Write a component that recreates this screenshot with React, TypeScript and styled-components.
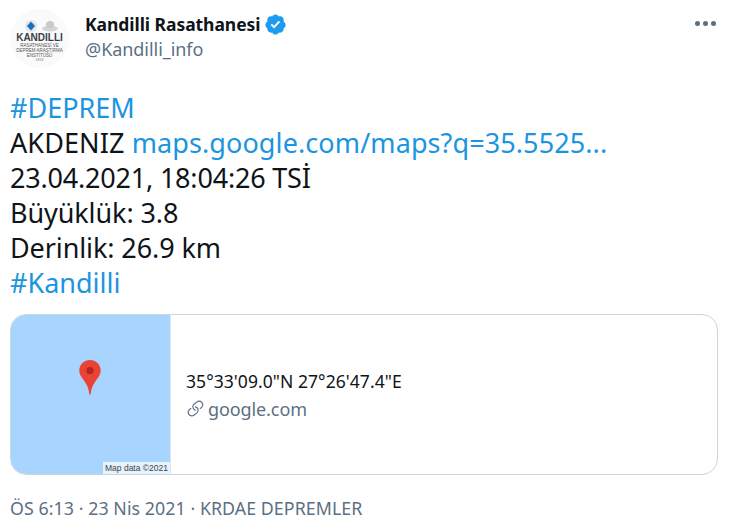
import React from "react";
import styled, { createGlobalStyle } from "styled-components";

const GlobalStyle = createGlobalStyle`
  html, body {
    margin: 0;
    background: #fff;
    font-family: "Noto Sans", "Open Sans", sans-serif;
  }
`;

export default function App() {
  return (
    <Tweet>
      <GlobalStyle />
      <Header>
        <Avatar>
          <LogoIcons viewBox="0 0 44 14">
            <circle cx="13" cy="7" r="6" fill="#dfe7f0" />
            <path d="M13 2.500l4 4.500-4 4.500-4-4.500z" fill="#1f6fb5" />
            <ellipse cx="32" cy="9.500" rx="8" ry="3" fill="#d4d4d4" />
            <ellipse cx="32" cy="5.500" rx="4" ry="3.500" fill="#c9c9c9" />
          </LogoIcons>
          <LogoTitle>KANDILLI</LogoTitle>
          <LogoLine>RASATHANESİ VE</LogoLine>
          <LogoLine>DEPREM ARAŞTIRMA</LogoLine>
          <LogoLine>ENSTİTÜSÜ</LogoLine>
          <LogoYear>1868</LogoYear>
        </Avatar>
        <Names>
          <NameRow>
            <DisplayName>Kandilli Rasathanesi</DisplayName>
            <Badge viewBox="0 0 24 24">
              <path
                fill="#1d9bf0"
                d="M22.5 12.5c0-1.58-.875-2.95-2.148-3.6.154-.435.238-.905.238-1.4 0-2.21-1.71-3.998-3.818-3.998-.47 0-.92.084-1.336.25C14.818 2.415 13.51 1.5 12 1.5s-2.816.917-3.437 2.25c-.415-.165-.866-.25-1.336-.25-2.11 0-3.818 1.79-3.818 4 0 .494.083.964.237 1.4-1.272.65-2.147 2.018-2.147 3.6 0 1.495.782 2.798 1.942 3.486-.02.17-.032.34-.032.514 0 2.21 1.708 4 3.818 4 .47 0 .92-.086 1.335-.25.62 1.334 1.926 2.25 3.437 2.25 1.512 0 2.818-.916 3.437-2.25.415.163.865.248 1.336.248 2.11 0 3.818-1.79 3.818-4 0-.174-.012-.344-.033-.513 1.158-.687 1.943-1.99 1.943-3.484z"
              />
              <path
                fill="#fff"
                d="M10.54 16.2l-3.6-3.6 1.42-1.42 2.1 2.1 4.9-5.3 1.48 1.36z"
              />
            </Badge>
          </NameRow>
          <Handle>@Kandilli_info</Handle>
        </Names>
        <More>
          <Dot />
          <Dot />
          <Dot />
        </More>
      </Header>

      <Body>
        <Line>
          <Link>#DEPREM</Link>
        </Line>
        <Line $spacing={0.1}>
          AKDENIZ <Link>maps.google.com/maps?q=35.5525...</Link>
        </Line>
        <Line $spacing={-0.2}>23.04.2021, 18:04:26 TSİ</Line>
        <Line $spacing={-0.1}>Büyüklük: 3.8</Line>
        <Line $spacing={-0.1}>Derinlik: 26.9 km</Line>
        <Line>
          <Link>#Kandilli</Link>
        </Line>
      </Body>

      <Card>
        <MapPane>
          <Pin viewBox="0 0 22 36">
            <path
              fill="#ea4335"
              d="M11 0C5 0 0 4.700 0 10.800c0 3.200 1.300 5.500 3.300 8.200 3.300 4.400 6.300 8.600 6.900 15.500.1.800.4 1.500.8 1.500s.7-.7.8-1.500c.6-6.900 3.600-11.100 6.900-15.500 2-2.700 3.300-5 3.300-8.200C22 4.700 17 0 11 0z"
            />
            <circle cx="11" cy="11" r="3.700" fill="#b3261e" />
          </Pin>
          <MapCredit>Map data ©2021</MapCredit>
        </MapPane>
        <CardInfo>
          <CardTitle>35°33'09.0"N 27°26'47.4"E</CardTitle>
          <CardSource>
            <LinkIcon viewBox="0 0 24 24">
              <path d="M11.96 14.945c-.067 0-.136-.01-.203-.027-1.13-.318-2.097-.986-2.795-1.932-.832-1.125-1.176-2.508-.968-3.893s.942-2.605 2.068-3.438l3.53-2.608c2.322-1.716 5.61-1.224 7.33 1.1.83 1.127 1.175 2.51.967 3.895s-.943 2.605-2.07 3.438l-1.48 1.094c-.333.246-.804.175-1.05-.158-.246-.334-.176-.804.158-1.05l1.48-1.095c.803-.592 1.327-1.463 1.476-2.45.148-.988-.098-1.975-.69-2.778-1.225-1.656-3.572-2.01-5.23-.784l-3.53 2.608c-.802.593-1.326 1.464-1.475 2.45-.15.99.097 1.975.69 2.778.498.675 1.187 1.15 1.992 1.377.4.114.633.528.52.928-.092.33-.394.547-.722.547z" />
              <path d="M7.27 22.054c-1.61 0-3.197-.735-4.225-2.125-.832-1.127-1.176-2.51-.968-3.894s.943-2.605 2.07-3.438l1.478-1.094c.334-.245.805-.175 1.05.158s.177.804-.157 1.05l-1.48 1.095c-.803.593-1.326 1.464-1.475 2.45-.148.99.097 1.975.69 2.778 1.225 1.657 3.57 2.01 5.23.785l3.528-2.608c1.658-1.225 2.01-3.57.785-5.23-.498-.674-1.187-1.15-1.992-1.376-.4-.113-.633-.527-.52-.927.112-.4.528-.63.926-.522 1.13.318 2.096.986 2.794 1.932 1.717 2.324 1.224 5.612-1.1 7.33l-3.53 2.608c-.933.693-2.023 1.026-3.105 1.026z" />
            </LinkIcon>
            google.com
          </CardSource>
        </CardInfo>
      </Card>

      <Meta>ÖS 6:13 · 23 Nis 2021 · KRDAE DEPREMLER</Meta>
    </Tweet>
  );
}

const Tweet = styled.div`
  width: 734px;
  height: 529px;
  box-sizing: border-box;
  padding: 9px 16px 0 10px;
  overflow: hidden;
  background: #fff;
`;

const Header = styled.div`
  display: flex;
  align-items: flex-start;
  gap: 16px;
  height: 70px;
`;

const Avatar = styled.div`
  width: 59px;
  height: 59px;
  flex: none;
  display: flex;
  flex-direction: column;
  align-items: center;
  justify-content: center;
  border-radius: 50%;
  background: #fafafa;
  box-sizing: border-box;
  padding-top: 4px;
  font-family: "Liberation Sans", Arial, sans-serif;
`;

const LogoIcons = styled.svg`
  width: 44px;
  height: 14px;
`;

const LogoTitle = styled.div`
  font-size: 10px;
  line-height: 10px;
  font-weight: 700;
  color: #3a3f47;
`;

const LogoLine = styled.div`
  font-size: 4.500px;
  line-height: 5px;
  color: #555;
  white-space: nowrap;
`;

const LogoYear = styled(LogoLine)`
  font-size: 3.500px;
  color: #888;
`;

const Names = styled.div`
  display: flex;
  flex-direction: column;
  flex: 1;
  padding-top: 3px;
`;

const NameRow = styled.div`
  display: flex;
  align-items: center;
  gap: 3px;
  height: 24px;
`;

const DisplayName = styled.span`
  font-size: 17.500px;
  font-weight: 700;
  color: #0f1419;
  letter-spacing: -0.05px;
`;

const Badge = styled.svg`
  width: 23px;
  height: 23px;
`;

const Handle = styled.span`
  font-size: 18px;
  line-height: 26px;
  color: #5b7083;
  letter-spacing: -0.05px;
`;

const More = styled.div`
  display: flex;
  gap: 3px;
  padding: 12px 2px 0 0;
`;

const Dot = styled.span`
  width: 5px;
  height: 5px;
  border-radius: 50%;
  background: #5b7083;
`;

const Body = styled.div`
  padding-top: 11px;
  font-size: 27px;
  line-height: 35px;
  color: #0f1419;
`;

const Line = styled.div<{ $spacing?: number }>`
  white-space: nowrap;
  letter-spacing: ${(p) => p.$spacing ?? 0}px;
`;

const Link = styled.span`
  color: #1b95e0;
`;

const Card = styled.div`
  display: flex;
  height: 159px;
  margin-top: 14px;
  border: 1px solid #ccd6dd;
  border-radius: 16px;
  overflow: hidden;
`;

const MapPane = styled.div`
  position: relative;
  width: 160px;
  box-sizing: border-box;
  flex: none;
  display: flex;
  align-items: center;
  justify-content: center;
  background: #a8d5ff;
  border-right: 1px solid #e1e8ed;
`;

const Pin = styled.svg`
  width: 22px;
  height: 35px;
  margin: 0 1px 34px 0;
`;

const MapCredit = styled.span`
  position: absolute;
  right: 0;
  bottom: 0;
  padding: 1px 2px 0 2px;
  font-family: "Liberation Sans", Arial, sans-serif;
  font-size: 8.500px;
  line-height: 11px;
  color: #444;
  background: rgba(255, 255, 255, 0.7);
`;

const CardInfo = styled.div`
  flex: 1;
  display: flex;
  flex-direction: column;
  justify-content: center;
  padding: 0 15px;
  gap: 2px;
`;

const CardTitle = styled.div`
  font-size: 17.500px;
  line-height: 26px;
  color: #0f1419;
  letter-spacing: 0.06px;
`;

const CardSource = styled.div`
  display: flex;
  align-items: center;
  gap: 3px;
  font-size: 18px;
  line-height: 26px;
  color: #5b7083;
  letter-spacing: -0.1px;
`;

const LinkIcon = styled.svg`
  width: 19px;
  height: 19px;
  fill: #5b7083;
`;

const Meta = styled.div`
  margin-top: 20px;
  font-size: 17.800px;
  line-height: 26px;
  color: #5b7083;
  letter-spacing: 0.06px;
`;
